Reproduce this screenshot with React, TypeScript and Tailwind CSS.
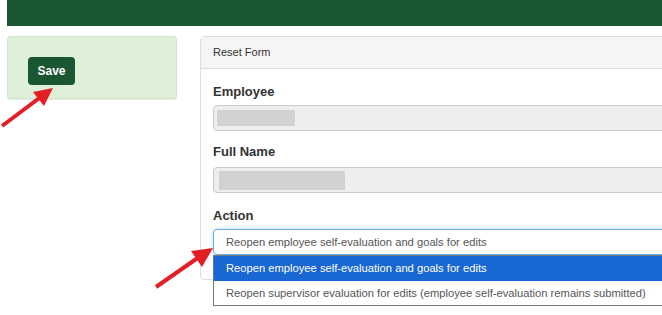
export default function App() {
  return (
    <div className="relative h-[315px] w-[662px] overflow-hidden bg-white font-['Liberation_Sans',Arial,sans-serif] text-[#333]">
      <div className="ml-[7px] h-[26px] bg-[#1b5632]" />

      <div className="flex items-start pl-[7px] pt-[10px]">
        {/* save box */}
        <div className="h-[63px] w-[170px] shrink-0 rounded-[3px] border border-[#d3e6c8] bg-[#dff0d8] shadow-[0_1px_1px_rgba(0,0,0,0.08)]">
          <button className="ml-[20px] mt-[20px] flex h-[28px] w-[47px] items-center justify-center rounded-[4px] bg-[#1b5632] text-[12px] font-bold text-white">
            Save
          </button>
        </div>

        {/* reset form panel */}
        <div className="ml-[23px] w-[520px] shrink-0 rounded-[4px] border border-[#ddd] bg-white">
          <div className="flex h-[32px] items-center border-b border-[#ddd] bg-[#f5f5f5] px-[12px] text-[11px] text-[#333]">
            Reset Form
          </div>
          <div className="px-[12px] pb-[24px] pt-[14px]">
            <div className="mb-[4px] text-[13px] font-bold leading-[18px]">Employee</div>
            <div className="flex h-[26px] items-center rounded-[4px] border border-[#ccc] bg-[#eee] pl-[3px]">
              <div className="h-[16px] w-[78px] bg-[#d1d2d4]" />
            </div>

            <div className="mb-[6px] mt-[12px] text-[13px] font-bold leading-[18px]">Full Name</div>
            <div className="flex h-[26px] items-center rounded-[4px] border border-[#ccc] bg-[#eee] pl-[5px]">
              <div className="h-[19px] w-[126px] bg-[#d1d2d4]" />
            </div>

            <div className="mb-[4px] mt-[14px] text-[13px] font-bold leading-[18px]">Action</div>
            <div className="relative">
              <div className="flex h-[26px] items-center whitespace-nowrap rounded-[4px] border border-[#66afe9] bg-white px-[12px] text-[11.2px] text-[#555] shadow-[0_0_4px_rgba(102,175,233,0.45)]">
                Reopen employee self-evaluation and goals for edits
              </div>
              <div className="absolute left-0 top-full w-[500px] border border-[#767676] bg-white text-[11.2px]">
                <div className="flex h-[25px] items-center whitespace-nowrap bg-[#1967d2] px-[12px] text-white">
                  Reopen employee self-evaluation and goals for edits
                </div>
                <div className="flex h-[24px] items-center whitespace-nowrap px-[12px] text-[#555]">
                  Reopen supervisor evaluation for edits (employee self-evaluation remains submitted)
                </div>
              </div>
            </div>
          </div>
        </div>
      </div>

      {/* annotation arrows */}
      <svg className="pointer-events-none absolute left-0 top-0" width="662" height="315" viewBox="0 0 662 315">
        <line x1="2" y1="126" x2="42" y2="96" stroke="#e31e24" strokeWidth="4" />
        <polygon points="53,88 33,92 44,106" fill="#e31e24" />
        <line x1="156" y1="287" x2="199" y2="257" stroke="#e31e24" strokeWidth="4" />
        <polygon points="213,248 191,251 202,267" fill="#e31e24" />
      </svg>
    </div>
  )
}
